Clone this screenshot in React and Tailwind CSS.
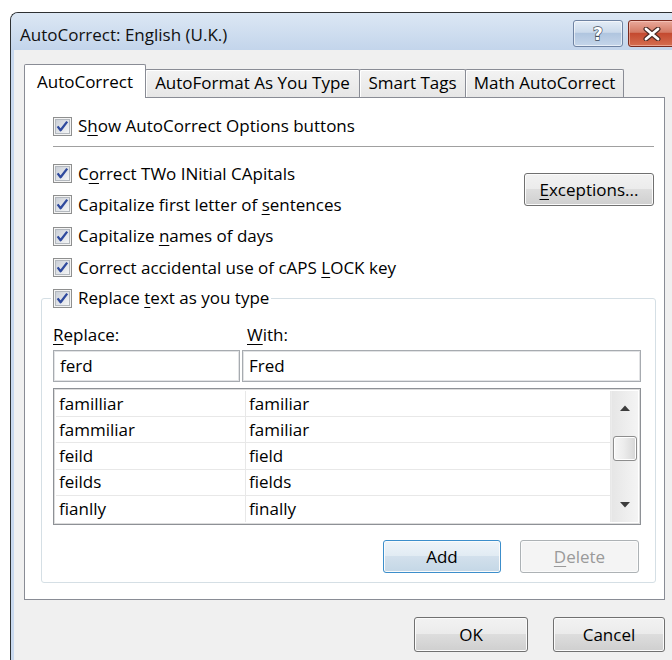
import React from "react";

const U = ({ children }) => (
  <span className="underline decoration-1 underline-offset-[3px]">{children}</span>
);

const CheckBox = () => (
  <svg width="19" height="19" viewBox="0 0 19 19" className="shrink-0">
    <defs>
      <linearGradient id="cbfill" x1="0" y1="0" x2="1" y2="1">
        <stop offset="0" stopColor="#c9ced6" />
        <stop offset="1" stopColor="#f6f7f8" />
      </linearGradient>
    </defs>
    <rect x="0.5" y="0.5" width="18" height="18" fill="#f4f4f4" stroke="#8e8f8f" />
    <rect x="2.5" y="2.5" width="14" height="14" fill="url(#cbfill)" stroke="#b3b8be" />
    <path
      d="M4.6 9.4 L7.6 13.2 L14.2 4.6"
      fill="none"
      stroke="#2f4a9e"
      strokeWidth="2.3"
      strokeLinejoin="round"
    />
  </svg>
);

const CheckRow = ({ children, className = "" }) => (
  <div className={"flex items-center gap-[6px] " + className}>
    <CheckBox />
    <span className="leading-[20px]">{children}</span>
  </div>
);

const btnBase =
  "flex items-center justify-center rounded-[3px] border leading-[20px] shadow-[inset_0_0_0_1px_#fbfbfb]";
const btnNormal =
  "border-[#707070] bg-[linear-gradient(#f2f2f2_0%,#ebebeb_49%,#dddddd_50%,#cfcfcf_100%)]";

const Tab = ({ children, w, active }) =>
  active ? (
    <div
      className={`${w} h-[34px] -mb-px relative z-10 flex items-start justify-center pt-[7px] border border-b-0 border-[#898c95] bg-white leading-[20px] rounded-t-[2px]`}
    >
      {children}
    </div>
  ) : (
    <div
      className={`${w} h-[28px] -ml-px flex items-start justify-center pt-[3px] border border-b-0 border-[#898c95] bg-[linear-gradient(#f3f3f3,#e6e6e6)] shadow-[inset_1px_1px_0_#ffffff] leading-[20px] rounded-t-[2px]`}
    >
      {children}
    </div>
  );

const rows = [
  ["familliar", "familiar"],
  ["fammiliar", "familiar"],
  ["feild", "field"],
  ["feilds", "fields"],
  ["fianlly", "finally"],
];

export default function App() {
  return (
    <div className="w-[672px] h-[660px] overflow-hidden bg-white pt-[12px] pl-[10px] font-['Open_Sans',sans-serif] text-[17px] text-black leading-none">
      <div className="w-[671px] h-[660px] rounded-tl-[8px] border-l border-t border-[#2e3133] bg-[#c9d9ee] flex flex-col">
        {/* caption bar */}
        <div className="h-[37px] shrink-0 flex items-start rounded-tl-[7px] bg-[linear-gradient(#dce7f4,#c3d5eb)]">
          <div className="pl-[9px] pt-[12px] leading-[20px] text-[#111]">
            AutoCorrect: English (U.K.)
          </div>
          <div className="ml-auto pt-[7px] pr-[5px] flex gap-[5px]">
            <div className="w-[50px] h-[27px] rounded-[3px] border border-[#6f83a2] bg-[linear-gradient(#e4edf7_0%,#cbdaeb_45%,#b0c5df_50%,#c5d6ea_100%)] shadow-[inset_0_0_0_1px_rgba(255,255,255,0.6)] flex items-center justify-center">
              <svg width="16" height="18" viewBox="0 0 16 18">
                <text
                  x="8"
                  y="15"
                  textAnchor="middle"
                  fontFamily="DejaVu Sans, sans-serif"
                  fontWeight="bold"
                  fontSize="17"
                  fill="#ffffff"
                  stroke="#3d4a5c"
                  strokeWidth="1.3"
                  paintOrder="stroke"
                >
                  ?
                </text>
              </svg>
            </div>
            <div className="w-[48px] h-[27px] rounded-[3px] border border-[#7a2a1e] bg-[linear-gradient(#e9a99b_0%,#d47a64_45%,#c44a30_50%,#d56e50_100%)] shadow-[inset_0_0_0_1px_rgba(255,220,210,0.5)] flex items-center justify-center">
              <svg width="18" height="14" viewBox="0 0 18 14">
                <path
                  d="M3 2 L15 12 M15 2 L3 12"
                  stroke="#4a2a24"
                  strokeWidth="5"
                  strokeLinecap="round"
                />
                <path
                  d="M3 2 L15 12 M15 2 L3 12"
                  stroke="#ffffff"
                  strokeWidth="2.8"
                  strokeLinecap="round"
                />
              </svg>
            </div>
          </div>
        </div>

        {/* client area */}
        <div className="ml-[3px] flex-1 bg-[#f0f0f0] pl-[10px] pt-[14px]">
          <div className="flex items-end h-[33px]">
            <Tab w="w-[122px]" active>
              AutoCorrect
            </Tab>
            <Tab w="w-[215px]">AutoFormat As You Type</Tab>
            <Tab w="w-[107px]">Smart Tags</Tab>
            <Tab w="w-[159px]">Math AutoCorrect</Tab>
          </div>

          <div className="w-[641px] h-[503px] border border-[#898c95] bg-white flex flex-col">
            <CheckRow className="h-[26px] mt-[15px] ml-[28px]">
              S<U>h</U>ow AutoCorrect Options buttons
            </CheckRow>
            <div className="mt-[7px] ml-[28px] mr-[10px] border-t border-[#a0a0a0]" />

            <div className="flex mt-[11px] ml-[28px] mr-[10px]">
              <div className="flex flex-col">
                <CheckRow className="h-[31px]">
                  C<U>o</U>rrect TWo INitial CApitals
                </CheckRow>
                <CheckRow className="h-[31px]">
                  Capitalize first letter of <U>s</U>entences
                </CheckRow>
                <CheckRow className="h-[32px]">
                  Capitalize <U>n</U>ames of days
                </CheckRow>
                <CheckRow className="h-[31px]">
                  Correct accidental use of cAPS <U>L</U>OCK key
                </CheckRow>
              </div>
              <div
                className={`${btnBase} ${btnNormal} ml-auto mt-[15px] w-[130px] h-[33px]`}
              >
                <span>
                  <U>E</U>xceptions...
                </span>
              </div>
            </div>

            <fieldset className="mt-[4px] ml-[16px] mr-[8px] mb-[16px] flex-1 border border-[#d5dfe5] rounded-[3px] pl-[9px] pr-[14px]">
              <legend className="px-[2px]">
                <CheckRow className="h-[22px]">
                  Replace <U>t</U>ext as you type
                </CheckRow>
              </legend>
              <div className="pl-[2px] flex flex-col">
                <div className="flex mt-[16px] h-[20px] leading-[20px]">
                  <div className="w-[194px]">
                    <U>R</U>eplace:
                  </div>
                  <div>
                    <U>W</U>ith:
                  </div>
                </div>
                <div className="flex gap-[2px] mt-[5px]">
                  <div className="w-[187px] h-[32px] border border-[#a7abb0] shadow-[inset_0_0_0_1px_#e2e3e5] flex items-center pl-[6px] leading-[20px]">
                    ferd
                  </div>
                  <div className="flex-1 h-[32px] border border-[#a7abb0] shadow-[inset_0_0_0_1px_#e2e3e5] flex items-center pl-[6px] leading-[20px]">
                    Fred
                  </div>
                </div>
                <div className="mt-[6px] h-[137px] border border-[#8e9196] shadow-[inset_0_0_0_1px_#dcdcdc] p-[2px] flex">
                  <div className="flex-1 flex flex-col">
                    {rows.map(([a, b], i) => (
                      <div
                        key={i}
                        className="h-[26.4px] flex border-b border-[#e8e8e8] last:border-b-0 leading-[20px]"
                      >
                        <div className="w-[190px] pl-[3px] flex items-center border-r border-[#e8e8e8]">
                          {a}
                        </div>
                        <div className="flex-1 pl-[3px] flex items-center border-r border-[#e8e8e8]">
                          {b}
                        </div>
                      </div>
                    ))}
                  </div>
                  {/* vertical scroll bar */}
                  <div className="w-[27px] bg-[linear-gradient(90deg,#e6e6e6,#f4f4f4)] border-l border-[#ececec] flex flex-col items-center">
                    <svg width="12" height="8" viewBox="0 0 12 8" className="mt-[13px]">
                      <path d="M1 7 L6 1.5 L11 7 Z" fill="#3c3c3c" />
                    </svg>
                    <div className="mt-[24px] w-[24px] h-[25px] rounded-[3px] border border-[#8d8d8d] bg-[linear-gradient(90deg,#f7f7f7_0%,#ececec_45%,#d6d6d6_100%)] shadow-[inset_0_0_0_1px_#ffffff]" />
                    <svg width="12" height="8" viewBox="0 0 12 8" className="mt-auto mb-[13px]">
                      <path d="M1 1 L6 6.5 L11 1 Z" fill="#3c3c3c" />
                    </svg>
                  </div>
                </div>
                <div className="flex justify-end gap-[19px] mt-[15px] mr-[2px]">
                  <div
                    className={`${btnBase} w-[118px] h-[33px] border-[#3c8ecb] bg-[linear-gradient(#eef4f9_0%,#e1ebf3_49%,#d2e0ec_50%,#c4d7e6_100%)] shadow-[inset_0_0_0_1px_#aee3f8]`}
                  >
                    Add
                  </div>
                  <div
                    className={`${btnBase} w-[119px] h-[33px] border-[#adb2b5] bg-[#f4f4f4] text-[#9a9a9a]`}
                  >
                    <span>
                      <U>D</U>elete
                    </span>
                  </div>
                </div>
              </div>
            </fieldset>
          </div>

          <div className="w-[641px] flex justify-end gap-[25px] mt-[17px]">
            <div className={`${btnBase} ${btnNormal} w-[114px] h-[35px]`}>OK</div>
            <div className={`${btnBase} ${btnNormal} w-[112px] h-[35px]`}>Cancel</div>
          </div>
        </div>
      </div>
    </div>
  );
}
